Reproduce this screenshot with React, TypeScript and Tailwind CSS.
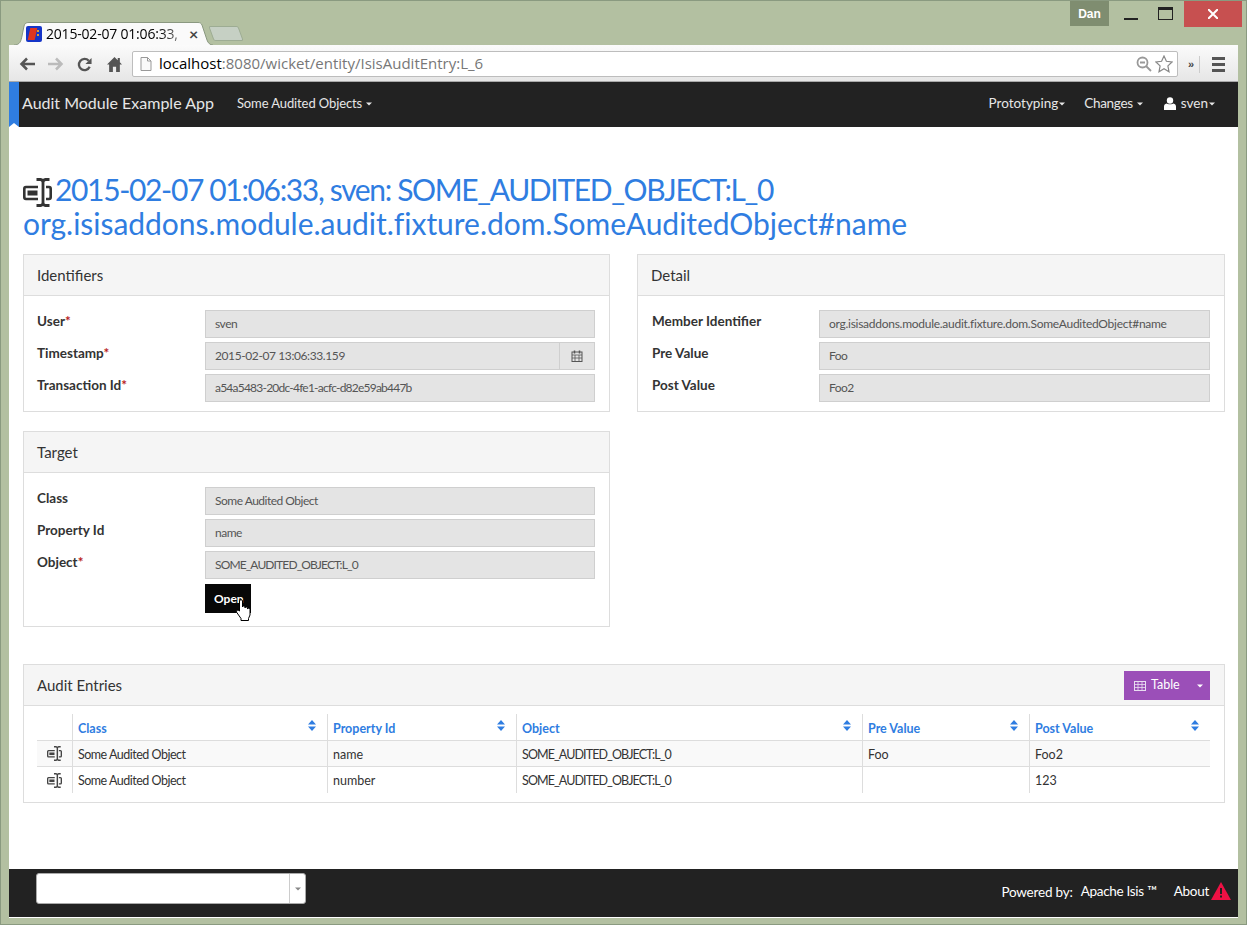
const sans = "font-['Lato','Noto_Sans',sans-serif]";
const chrome = "font-['Open_Sans',sans-serif]";

function FieldIcon({ className }: { className: string }) {
  return (
    <svg viewBox="0 0 29 29" className={className} fill="none" stroke="currentColor">
      <path d="M15 9H3A1.800 1.800 0 0 0 1.300 10.800v8.400A1.800 1.800 0 0 0 3 21H15" strokeWidth="2.600" />
      <rect x="4.500" y="12.500" width="10" height="5" fill="currentColor" stroke="none" />
      <path d="M23 9h3A1.800 1.800 0 0 1 27.700 10.800v8.400A1.800 1.800 0 0 1 26 21H23" strokeWidth="2.600" />
      <path d="M13.500 1.500h4Q20 1.800 20 4.500v20q0 2.700-2.500 3H13.500M26.500 1.500h-4Q20 1.800 20 4.500M26.500 27.500h-4Q20 27.200 20 24.500" strokeWidth="2.800" />
    </svg>
  );
}

function SortIcon() {
  return (
    <svg viewBox="0 0 8 11" className="h-[11px] w-2 text-[#2f7de1]" fill="currentColor">
      <path d="M4 0l4 4.500H0zM0 6.500h8L4 11z" />
    </svg>
  );
}

function Caret({ className = "" }: { className?: string }) {
  return <span className={`inline-block scale-75 border-x-[4px] border-t-[4px] border-x-transparent border-t-current ${className}`} />;
}

type FieldProps = { label: string; value: string; required?: boolean; date?: boolean; tracking?: string };

function Field({ label, value, required, date, tracking = "tracking-[-0.5px]" }: FieldProps) {
  return (
    <div className="flex h-7 items-start">
      <div className="w-[168px] pt-[2px] text-[13.5px] font-bold leading-[18px] text-[#333]">
        {label}
        {required && <span className="text-[#b81c1c]">*</span>}
      </div>
      <div className={`flex h-7 flex-1 items-center whitespace-nowrap border border-[#cfcfcf] bg-[#e4e4e4] px-[9px] text-[12px] text-[#555] ${tracking}`}>
        {value}
      </div>
      {date && (
        <div className="flex h-7 w-[35px] items-center justify-center border border-l-0 border-[#cfcfcf] bg-[#e4e4e4]">
          <svg viewBox="0 0 12 12" className="h-3 w-3 text-[#555]" fill="none" stroke="currentColor">
            <rect x="1" y="2" width="10" height="9.500" />
            <path d="M1 5h10M1 8h10M4 5v6M8 5v6" strokeWidth="0.800" />
            <path d="M3.500 0.500v3M8.500 0.500v3" strokeWidth="1.500" />
          </svg>
        </div>
      )}
    </div>
  );
}

function Panel({ title, children, className = "" }: { title: string; children: React.ReactNode; className?: string }) {
  return (
    <div className={`border border-[#dddddd] bg-white ${className}`}>
      <div className="flex h-[41px] items-center border-b border-[#dddddd] bg-[#f5f5f5] px-[13px] text-[15px] text-[#333]">
        {title}
      </div>
      {children}
    </div>
  );
}

const columns = ["Class", "Property Id", "Object", "Pre Value", "Post Value"];
const rows = [
  ["Some Audited Object", "name", "SOME_AUDITED_OBJECT:L_0", "Foo", "Foo2"],
  ["Some Audited Object", "number", "SOME_AUDITED_OBJECT:L_0", "", "123"],
];
const colClass = ["w-[255px]", "w-[189px]", "w-[346px]", "w-[167px]", "w-[181px]"];
const cellTracking = ["tracking-[-0.5px]", "", "tracking-[-0.9px]", "", ""];

function Titlebar() {
  return (
    <div className="flex h-[44px] items-start justify-between pl-[5px] pr-[1px]">
      <div className="flex items-end pt-[21px]">
        <div className="relative flex h-[23px] w-[199px] items-center pl-[12px]">
          <svg viewBox="0 0 199 23" className="absolute inset-0 h-[23px] w-[199px]" fill="#fafafa" stroke="#8a9880">
            <path d="M0 23C6 23 7 19 8 14L10 4C11 1 12 .5 15 .5H184C186 .5 187 1 188 3L193 18C194 21 196 23 199 23" />
          </svg>
          <div className="relative h-4 w-4 rounded-[2px] bg-[#1535c8]">
            <span className="absolute left-[3px] top-[2px] h-3 w-[7px] -skew-x-12 bg-[#e0361f]" />
            <span className="absolute left-[11px] top-[4px] h-[2px] w-[2px] bg-[#e0a030]" />
            <span className="absolute left-[11px] top-[8px] h-[2px] w-[2px] bg-[#e0a030]" />
          </div>
          <span className={`relative ml-[4px] w-[139px] whitespace-nowrap text-[14px] leading-[18px] tracking-[-0.2px] text-black [mask-image:linear-gradient(to_right,black_80%,#0006)] ${chrome}`}>
            2015-02-07 01:06:33,
          </span>
          <span className="relative ml-[4px] text-[16px] font-bold leading-none text-[#444]">×</span>
        </div>
        <div className="mb-[4px] ml-[-2px] h-[15px] w-[30px] skew-x-[20deg] rounded-[2px] border border-[#9dac93] bg-[#c6d0c4]" />
      </div>
      <div className="mr-[-5px] flex items-start">
        <div className="flex h-[25px] w-[39px] items-center justify-center bg-[#7f8d70] font-['Liberation_Sans',sans-serif] text-[12px] font-bold text-white">
          Dan
        </div>
        <div className="ml-[3px] flex h-[25px] w-[38px] items-end justify-center pb-[6px]">
          <span className="h-[2px] w-[14px] bg-[#222]" />
        </div>
        <div className="ml-[-9px] flex h-[25px] w-[48px] items-center justify-center">
          <span className="h-[13px] w-[15px] border border-t-[3px] border-[#222]" />
        </div>
        <div className="ml-[-5px] flex h-[26px] w-[58px] items-center justify-center bg-[#c75050]">
          <svg viewBox="0 0 10 10" className="h-[10px] w-[10px]" stroke="white" strokeWidth="2">
            <path d="M0 0l10 10M10 0L0 10" />
          </svg>
        </div>
      </div>
    </div>
  );
}

function Toolbar() {
  return (
    <div className="flex h-[37px] items-center border-b border-[#a9a9a9] bg-gradient-to-b from-[#fbfbfb] to-[#e6e6e6] pl-[10px] pr-[9px] pt-[2px]">
      <svg viewBox="0 0 16 14" className="h-[14px] w-4" fill="none" stroke="#555" strokeWidth="2.500">
        <path d="M16 7H3M8 1.500L2.500 7 8 12.500" />
      </svg>
      <svg viewBox="0 0 16 14" className="ml-[13px] h-[14px] w-4" fill="none" stroke="#bbb" strokeWidth="2.500">
        <path d="M0 7h13M8 1.500L13.500 7 8 12.500" />
      </svg>
      <svg viewBox="0 0 16 16" className="ml-[13px] h-[15px] w-[15px]" fill="none" stroke="#555" strokeWidth="2.500">
        <path d="M13.500 10.500A6 6 0 1 1 12.500 4" />
        <path d="M15.500 1v6.500H9z" fill="#555" stroke="none" />
      </svg>
      <svg viewBox="0 0 14 14" className="ml-[15px] h-[15px] w-[15px]" fill="#555">
        <path d="M7 0L0 7h2v7h3.500V9h3v5H12V7h2l-2-2V1h-2v2z" />
      </svg>
      <div className="ml-[10px] flex h-[26px] w-[1046px] items-center rounded-[2px] border border-[#bdbdbd] bg-white pl-[7px] pr-[4px]">
        <svg viewBox="0 0 12 14" className="h-[14px] w-3" fill="#fafafa" stroke="#999">
          <path d="M1 .5h6.500L11 4v9.500H1zM7.500 .5V4H11" />
        </svg>
        <span className={`ml-[7px] -mt-[1px] text-[15px] text-[#777] ${chrome}`}>
          <span className="text-black">localhost</span>:8080/wicket/entity/IsisAuditEntry:L_6
        </span>
        <svg viewBox="0 0 16 16" className="ml-auto h-4 w-4" fill="none" stroke="#999" strokeWidth="1.800">
          <circle cx="6.500" cy="6.500" r="5" />
          <path d="M4 6.500h5M10 10l5 5" />
        </svg>
        <svg viewBox="0 0 18 18" className="ml-[3px] h-[18px] w-[18px]" fill="#fff" stroke="#888" strokeWidth="1.200">
          <path d="M9 1l2.400 5.300 5.600.7-4.100 3.900 1.100 5.800L9 13.800 4 16.700l1.100-5.800L1 7l5.600-.7z" />
        </svg>
      </div>
      <span className="ml-[10px] font-['Liberation_Sans',sans-serif] text-[11px] font-bold leading-none text-[#444]">»</span>
      <span className="ml-[5px] h-[17px] w-px bg-[#ccc]" />
      <div className="ml-[12px] flex flex-col gap-[3px]">
        <span className="h-[3px] w-[13px] bg-[#555]" />
        <span className="h-[3px] w-[13px] bg-[#555]" />
        <span className="h-[3px] w-[13px] bg-[#555]" />
      </div>
    </div>
  );
}

function Navbar() {
  return (
    <div className="flex h-[45px] items-center justify-between bg-[#222222] pr-[22px] text-[13.5px] text-[#e6e6e6]">
      <div className="flex h-full items-center">
        <div className="relative h-full w-[10px] bg-[#2f7de1]">
          <span className="absolute bottom-0 left-0 border-x-[5px] border-b-[4px] border-x-transparent border-b-white" />
        </div>
        <span className="mb-[3px] ml-[3px] text-[16px] leading-none">Audit Module Example App</span>
        <span className="mb-[2px] ml-[23px] flex items-center gap-[3px] text-[13px] tracking-[-0.1px]">
          Some Audited Objects <Caret />
        </span>
      </div>
      <div className="mb-[2px] flex items-center">
        <span className="flex items-center">
          Prototyping <Caret />
        </span>
        <span className="ml-[18px] flex items-center gap-[3px] tracking-[-0.3px]">
          Changes <Caret />
        </span>
        <span className="ml-[20px] flex items-center gap-[5px]">
          <svg viewBox="0 0 12 13" className="h-[13px] w-3" fill="white">
            <circle cx="6" cy="3.500" r="3.200" />
            <path d="M0 13V9.500C0 8 1 6.800 2.500 6.500 3.500 7.500 8.500 7.500 9.500 6.500 11 6.800 12 8 12 9.500V13z" />
          </svg>
          <span className="flex items-center">
            sven
            <Caret />
          </span>
        </span>
      </div>
    </div>
  );
}

function AuditTable() {
  return (
    <div className="pb-[9px] pl-[13px] pr-[14px] pt-[8px] text-[12.5px] text-[#333]">
      <div className="flex h-[27px] border-b border-[#dddddd]">
        <div className="w-[35px]" />
        {columns.map((c, i) => (
          <div key={c} className={`flex justify-between border-l border-[#dddddd] pl-[5px] pr-[11px] ${colClass[i]}`}>
            <span className="pt-[8px] font-bold leading-[14px] text-[#2f7de1]">{c}</span>
            <span className="pt-[6px]">
              <SortIcon />
            </span>
          </div>
        ))}
      </div>
      {rows.map((r, idx) => (
        <div key={r[1]} className={`flex h-[26px] ${idx === 0 ? "border-b border-[#dddddd] bg-[#f9f9f9]" : ""}`}>
          <div className="flex w-[35px] items-center justify-center">
            <FieldIcon className="h-[15px] w-[15px] text-[#444]" />
          </div>
          {r.map((v, i) => (
            <div key={i} className={`flex items-center border-l border-[#dddddd] pl-[5px] pt-[3px] ${colClass[i]} ${cellTracking[i]}`}>
              {v}
            </div>
          ))}
        </div>
      ))}
    </div>
  );
}

export default function App() {
  return (
    <div className={`h-[925px] w-[1247px] overflow-hidden border border-[#8a9a80] bg-[#b3c0a1] ${sans}`}>
      <div className="ml-[8px] w-[1229px]">
        <Titlebar />
        <Toolbar />
        <Navbar />
        <div className="h-[742px] bg-white pl-[14px] pr-[13px] pt-[45px]">
          <h1 className="text-[30px] leading-[34px] text-[#2f7de1]">
            <span className="block whitespace-nowrap tracking-[-1.35px]">
              <FieldIcon className="mr-[3px] inline-block h-[29px] w-[29px] align-[-6px] text-[#333]" />
              2015-02-07 01:06:33, sven: SOME_AUDITED_OBJECT:L_0
            </span>
            <span className="-mt-[1px] block tracking-[-0.03px]">org.isisaddons.module.audit.fixture.dom.SomeAuditedObject#name</span>
          </h1>
          <div className="mt-[14px] flex items-start gap-[27px]">
            <div className="flex w-[587px] flex-col gap-[19px]">
              <Panel title="Identifiers">
                <div className="flex flex-col gap-1 pb-[9px] pl-[13px] pr-[14px] pt-[14px]">
                  <Field label="User" value="sven" required />
                  <Field label="Timestamp" value="2015-02-07 13:06:33.159" required date tracking="tracking-[-0.4px]" />
                  <Field label="Transaction Id" value="a54a5483-20dc-4fe1-acfc-d82e59ab447b" required tracking="tracking-[-0.78px]" />
                </div>
              </Panel>
              <Panel title="Target">
                <div className="flex flex-col gap-1 pb-[13px] pl-[13px] pr-[14px] pt-[14px]">
                  <Field label="Class" value="Some Audited Object" />
                  <Field label="Property Id" value="name" />
                  <Field label="Object" value="SOME_AUDITED_OBJECT:L_0" required tracking="tracking-[-0.87px]" />
                  <div className="relative ml-[168px] mt-[1px] flex h-[29px] w-[46px] items-center bg-[#070707] pl-[9px] text-[12px] font-bold text-white">
                    Open
                    <svg viewBox="0 0 15 22" className="absolute left-[31px] top-[15px] h-[22px] w-[15px]" fill="white" stroke="black" strokeWidth="1">
                      <path d="M3.500 2c0-1.800 3-1.800 3 0v6c0-1.500 2.500-1.500 2.500 0v1c0-1.400 2.500-1.400 2.500 0v1c0-1.200 2.500-1.200 2.500.5V16l-1.500 3.500v2H5v-2L.8 13.500c-1-2 1.200-3 2.700-1.500z" />
                    </svg>
                  </div>
                </div>
              </Panel>
            </div>
            <Panel title="Detail" className="w-[588px]">
              <div className="flex flex-col gap-1 pb-[9px] pl-[14px] pr-[14px] pt-[14px] [&>div>div:first-child]:w-[167px]">
                <Field label="Member Identifier" value="org.isisaddons.module.audit.fixture.dom.SomeAuditedObject#name" tracking="tracking-[-0.27px]" />
                <Field label="Pre Value" value="Foo" />
                <Field label="Post Value" value="Foo2" />
              </div>
            </Panel>
          </div>
          <div className="mt-[37px] border border-[#dddddd]">
            <div className="flex h-[41px] items-center justify-between border-b border-[#dddddd] bg-[#f5f5f5] pl-[13px] pr-[14px] text-[15px] text-[#333]">
              Audit Entries
              <div className="flex h-[29px] w-[86px] items-center bg-[#9b4fb8] pl-[10px] pt-[1px] text-[12.5px] text-white">
                <svg viewBox="0 0 12 10" className="h-[10px] w-3" fill="none" stroke="#e8ddf0">
                  <rect x=".5" y=".5" width="11" height="9" />
                  <path d="M.5 3.500h11M.5 6.500h11M4 .5v9M8 .5v9" strokeWidth="0.800" />
                </svg>
                <span className="ml-[5px]">Table</span>
                <Caret className="ml-[16px]" />
              </div>
            </div>
            <AuditTable />
          </div>
        </div>
        <div className="flex h-[49px] items-start justify-between border-b border-white bg-[#222222] pl-[27px] pr-[7px] pt-[4px] text-[13.5px] text-white">
          <div className="flex h-[31px] w-[270px] items-center justify-end rounded-[3px] border border-[#aaa] bg-white">
            <div className="flex h-full w-4 items-center justify-center border-l border-[#ccc]">
              <Caret className="text-[#888]" />
            </div>
          </div>
          <div className="flex items-center pt-[8px]">
            <span className="mt-[1px] tracking-[-0.2px]">Powered by:</span>
            <span className="ml-[8px] -mt-[1px] tracking-[-0.3px]">Apache Isis ™</span>
            <span className="ml-[17px] -mt-[1px] tracking-[-0.3px]">About</span>
            <svg viewBox="0 0 20 18" className="-mt-[2px] ml-[2px] h-[18px] w-5">
              <path d="M10 0l10 18H0z" fill="#ee1144" />
              <rect x="9" y="6" width="2" height="6" fill="#222" />
              <rect x="9" y="13.500" width="2" height="2" fill="#222" />
            </svg>
          </div>
        </div>
      </div>
    </div>
  );
}
